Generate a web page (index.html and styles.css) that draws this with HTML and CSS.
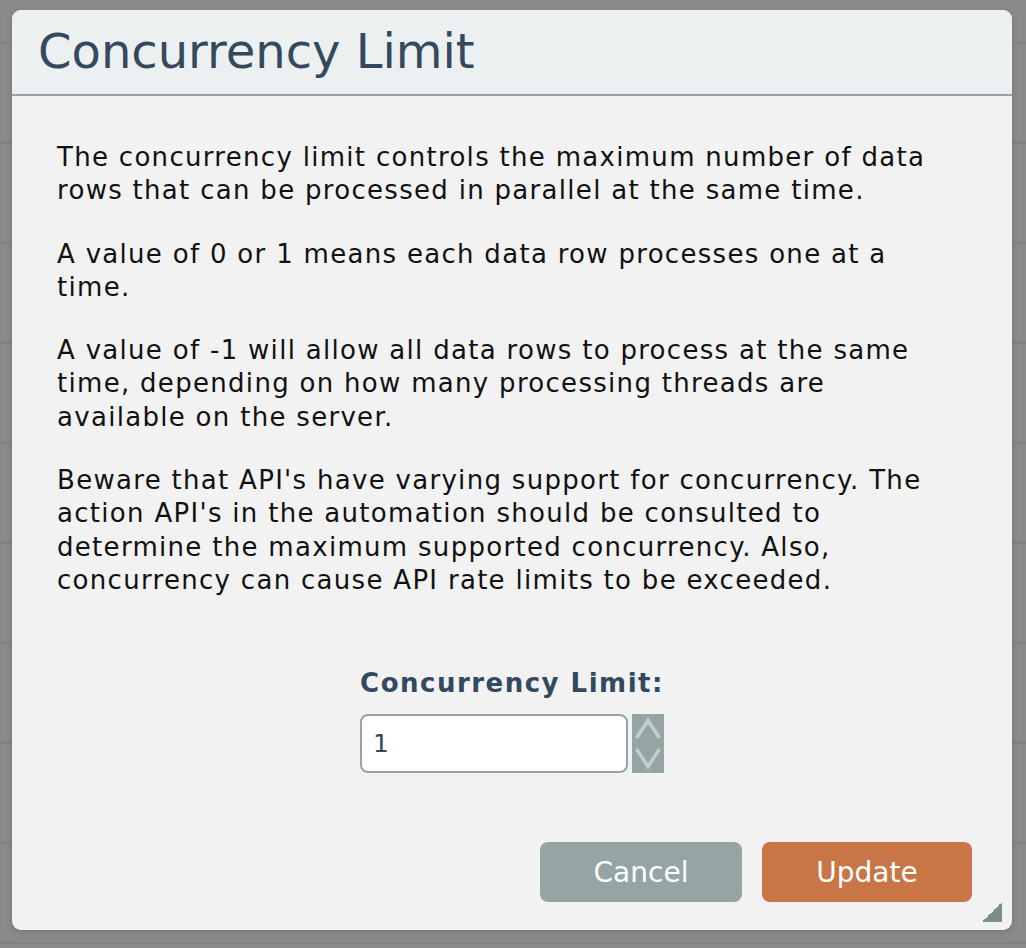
FILE: index.html
```html
<!DOCTYPE html>
<html lang="en">
<head>
<meta charset="utf-8">
<title>Concurrency Limit</title>
<link rel="stylesheet" href="styles.css">
</head>
<body>
<div class="backdrop">
  <div class="dialog">
    <div class="dlg-head">
      <h1 class="dlg-title">Concurrency Limit</h1>
    </div>
    <div class="dlg-body">
      <p class="dlg-text">The concurrency limit controls the maximum number of data rows that can be processed in parallel at the same time.</p>
      <p class="dlg-text">A value of 0 or 1 means each data row processes one at a time.</p>
      <p class="dlg-text">A value of -1 will allow all data rows to process at the same time, depending on how many processing threads are available on the server.</p>
      <p class="dlg-text">Beware that API's have varying support for concurrency. The action API's in the automation should be consulted to determine the maximum supported concurrency. Also, concurrency can cause API rate limits to be exceeded.</p>
      <div class="field">
        <label class="field-label" for="cl">Concurrency Limit:</label>
        <div class="field-row">
          <input class="num-input" id="cl" type="text" value="1">
          <div class="spinner">
            <svg viewBox="0 0 32 59" width="32" height="59">
              <polyline points="4.5,24 16,6.5 27.5,24" fill="none" stroke="#c6cece" stroke-width="3.5"/>
              <polyline points="4.5,35 16,52.5 27.5,35" fill="none" stroke="#c6cece" stroke-width="3.5"/>
            </svg>
          </div>
        </div>
      </div>
    </div>
    <div class="dlg-foot">
      <button class="btn btn-cancel">Cancel</button>
      <button class="btn btn-update">Update</button>
    </div>
    <div class="resize-grip"></div>
  </div>
</div>
</body>
</html>
```

FILE: styles.css
```css
* { box-sizing: border-box; }
html, body { margin: 0; padding: 0; }
body {
  width: 1026px;
  height: 948px;
  overflow: hidden;
  font-family: Verdana, "DejaVu Sans", sans-serif;
}
.backdrop {
  width: 1026px;
  height: 948px;
  background-color: #8a8a8a;
  background-image: repeating-linear-gradient(to bottom,
    transparent 0px, transparent 42px, #818181 42px, #818181 44px, transparent 44px, transparent 100px);
  padding: 10px 14px 18px 12px;
}
.dialog {
  position: relative;
  width: 1000px;
  height: 920px;
  background: #f2f2f2;
  border-radius: 9px;
  display: flex;
  flex-direction: column;
  overflow: hidden;
  box-shadow: 0 2px 6px rgba(0,0,0,0.15);
}
.dlg-head {
  height: 86px;
  background: #ecf0f1;
  border-bottom: 2px solid #95a5a6;
  display: flex;
  align-items: center;
  padding-left: 26px;
}
.dlg-title {
  margin: 0;
  font-size: 48px;
  font-weight: normal;
  color: #34495e;
  line-height: 1;
  padding-bottom: 2px;
}
.dlg-body {
  flex: 1;
  padding: 45px 45px 0 45px;
}
.dlg-text {
  margin: 0 0 30px;
  max-width: 895px;
  font-size: 26px;
  letter-spacing: 1.3px;
  line-height: 33.3px;
  color: #111;
}
.field {
  display: flex;
  flex-direction: column;
  align-items: center;
  margin-top: 70px;
}
.field-label {
  font-size: 26px;
  letter-spacing: 1.5px;
  font-weight: bold;
  color: #34495e;
  line-height: 32px;
  margin-bottom: 15px;
}
.field-row {
  display: flex;
  gap: 4px;
}
.num-input {
  width: 268px;
  height: 59px;
  border: 2px solid #95a5a6;
  border-radius: 8px;
  background: #fff;
  font-family: Verdana, "DejaVu Sans", sans-serif;
  font-size: 25px;
  color: #34495e;
  padding: 0 11px;
  outline: none;
}
.spinner {
  width: 32px;
  height: 59px;
  background: #95a5a6;
}
.spinner svg { display: block; }
.dlg-foot {
  display: flex;
  justify-content: flex-end;
  gap: 20px;
  padding: 0 40px 28px 0;
}
.btn {
  height: 60px;
  border: none;
  border-radius: 8px;
  color: #fff;
  font-family: Verdana, "DejaVu Sans", sans-serif;
  font-size: 28px;
  cursor: pointer;
}
.btn-cancel { width: 202px; background: #95a5a6; }
.btn-update { width: 210px; background: #c87547; }
.resize-grip {
  position: absolute;
  right: 10px;
  bottom: 8px;
  width: 20px;
  height: 20px;
  background: linear-gradient(to bottom right, transparent 50%, #7f8c8d 50%);
}
```
